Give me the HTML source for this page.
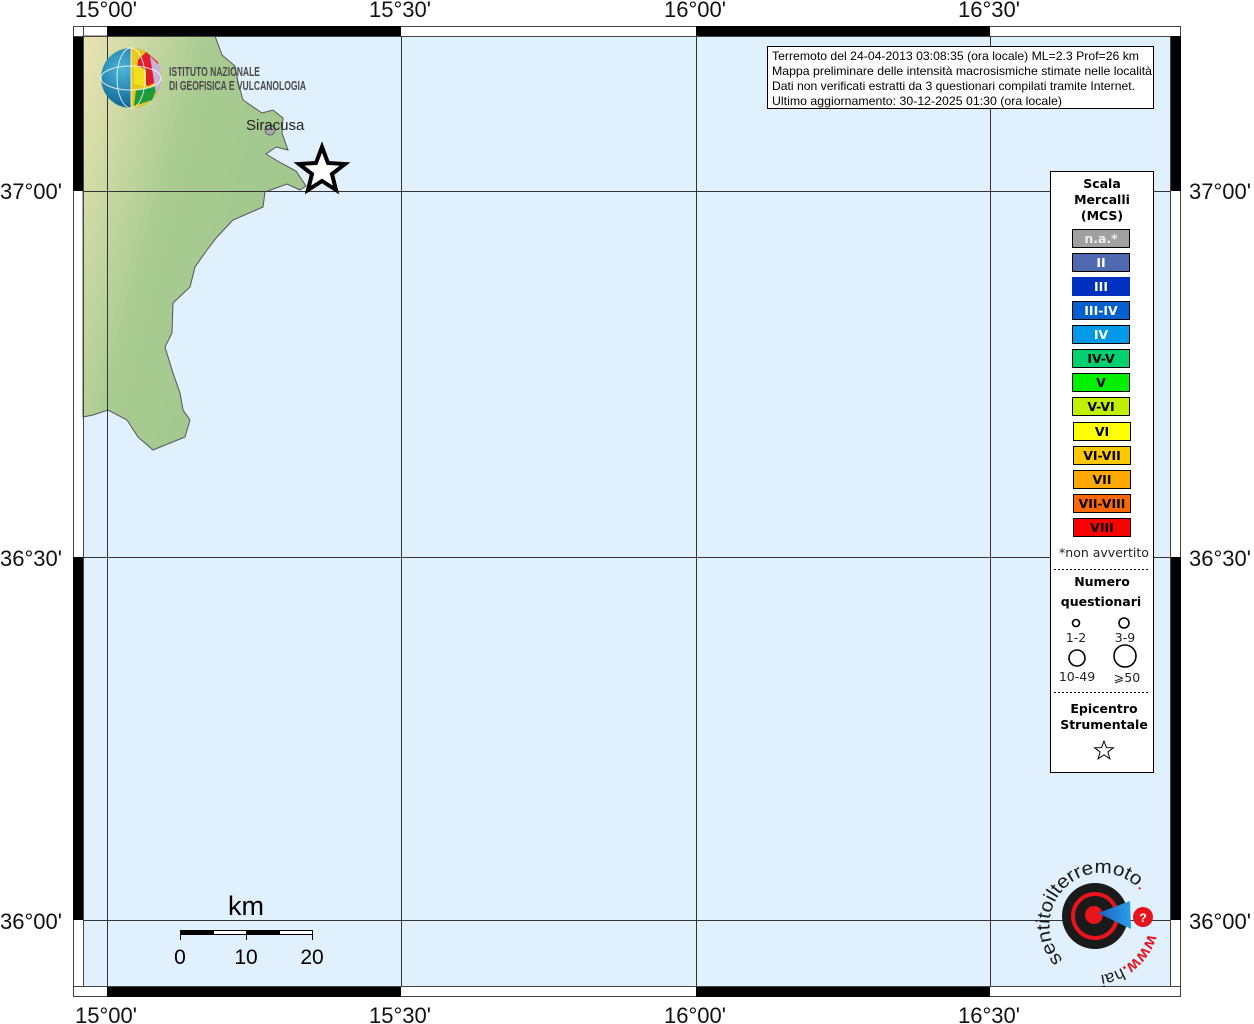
<!DOCTYPE html>
<html><head><meta charset="utf-8"><style>
html,body{margin:0;padding:0;background:#fff;width:1254px;height:1024px;overflow:hidden}
svg{display:block}
.lab{font-family:"Liberation Sans",sans-serif;font-size:22px;fill:#111}
.dv{font-family:"DejaVu Sans",sans-serif}
</style></head><body>
<svg width="1254" height="1024" viewBox="0 0 1254 1024" xmlns="http://www.w3.org/2000/svg">
<defs>
<linearGradient id="land" x1="0" y1="0" x2="1" y2="0.5">
<stop offset="0" stop-color="#e9e4b2"/><stop offset="0.2" stop-color="#cfd9a6"/><stop offset="0.45" stop-color="#a9cb92"/><stop offset="1" stop-color="#9fc78d"/>
</linearGradient>
<radialGradient id="glb" cx="0.35" cy="0.35" r="0.7"><stop offset="0" stop-color="#4cb6da"/><stop offset="1" stop-color="#0a5f8a"/></radialGradient>
<linearGradient id="cone" x1="0" y1="0" x2="1" y2="0"><stop offset="0" stop-color="#1a5fc0"/><stop offset="1" stop-color="#2aa0e8"/></linearGradient>
</defs>
<rect x="83" y="36" width="1088" height="951" fill="#e0f0fd"/>
<path d="M83,36 L215,36 L222,55 L235,66 L238,82 L243,100 L262,113 L273,110 L283,118 L282,133 L288,150 L276,147 L266,154 L281,163 L296,171 L306,186 L300,190 L287,184 L265,192 L263,207 L233,220 L217,237 L207,250 L195,267 L190,287 L173,303 L172,333 L165,347 L173,373 L180,393 L183,410 L190,420 L185,437 L153,450 L138,437 L127,420 L108,410 L93,415 L83,417 Z" fill="url(#land)" stroke="#555" stroke-width="1"/>
<g stroke="#333" stroke-width="1">
<line x1="107.5" y1="36" x2="107.5" y2="987"/><line x1="401.5" y1="36" x2="401.5" y2="987"/>
<line x1="696.5" y1="36" x2="696.5" y2="987"/><line x1="990.5" y1="36" x2="990.5" y2="987"/>
<line x1="83" y1="191.5" x2="1171" y2="191.5"/><line x1="83" y1="557.5" x2="1171" y2="557.5"/>
<line x1="83" y1="920.5" x2="1171" y2="920.5"/>
</g>
<rect x="73.5" y="26.5" width="1107" height="970" fill="none" stroke="#444" stroke-width="1"/>
<rect x="83.5" y="36.5" width="1087" height="950" fill="none" stroke="#444" stroke-width="1"/>
<g fill="#000">
<rect x="107" y="26" width="294" height="10"/><rect x="696" y="26" width="294" height="10"/>
<rect x="107" y="987" width="294" height="10"/><rect x="696" y="987" width="294" height="10"/>
<rect x="73" y="36" width="10" height="155"/><rect x="73" y="557" width="10" height="363"/>
<rect x="1171" y="36" width="10" height="155"/><rect x="1171" y="557" width="10" height="363"/>
</g>
<g stroke="#444" stroke-width="1"><line x1="73" y1="36.5" x2="83" y2="36.5"/><line x1="83.5" y1="26" x2="83.5" y2="36"/><line x1="1171" y1="986.5" x2="1181" y2="986.5"/><line x1="73" y1="986.5" x2="83" y2="986.5"/></g>
<g class="lab">
<text x="75" y="17">15°00'</text><text x="369" y="17">15°30'</text><text x="664" y="17">16°00'</text><text x="958" y="17">16°30'</text>
<text x="75" y="1023">15°00'</text><text x="369" y="1023">15°30'</text><text x="664" y="1023">16°00'</text><text x="958" y="1023">16°30'</text>
<text x="0" y="199">37°00'</text><text x="0" y="566">36°30'</text><text x="0" y="929">36°00'</text>
<text x="1189" y="199">37°00'</text><text x="1189" y="566">36°30'</text><text x="1189" y="929">36°00'</text>
</g>
<circle cx="270" cy="130" r="5" fill="#aaa" stroke="#666"/>
<text x="246" y="130" font-family="Liberation Sans,sans-serif" font-size="15" fill="#222">Siracusa</text>
<polygon points="322,147 328,163 345,164 332,174 336,190 322,181 308,190 312,174 299,164 316,163" fill="#fff" stroke="#000" stroke-width="4" stroke-linejoin="miter"/>
<circle cx="131" cy="78" r="30" fill="url(#glb)"/>
<path d="M131,48 A30,30 0 0 1 161,78 A30,30 0 0 1 131,108 Z" fill="#e8c820"/>
<path d="M146,52 L158,62 L160,80 L148,86 L136,80 L138,60Z" fill="#e31e2c"/>
<path d="M134,64 L146,70 L146,86 L134,84Z" fill="#f0e020"/>
<path d="M136,90 L158,86 L152,100 L134,106Z" fill="#1f9a3a"/>
<path d="M150,56 L160,66 L161,84 L156,94Z" fill="#c9b4d8"/>
<g fill="none" stroke="#fff" stroke-width="1" opacity="0.8"><ellipse cx="131" cy="78" rx="14" ry="30"/><ellipse cx="131" cy="78" rx="30" ry="12"/><line x1="131" y1="48" x2="131" y2="108"/></g>
<text x="169" y="76" font-family="Liberation Sans,sans-serif" font-size="13" font-weight="bold" fill="#4a4a4a" textLength="91" lengthAdjust="spacingAndGlyphs">ISTITUTO NAZIONALE</text>
<text x="169" y="90" font-family="Liberation Sans,sans-serif" font-size="13" font-weight="bold" fill="#4a4a4a" textLength="137" lengthAdjust="spacingAndGlyphs">DI GEOFISICA E VULCANOLOGIA</text>
<rect x="767.5" y="46.5" width="386" height="62" fill="#fff" stroke="#000"/>
<g font-family="Liberation Sans,sans-serif" font-size="12" fill="#000" lengthAdjust="spacingAndGlyphs">
<text x="772" y="60" textLength="367" lengthAdjust="spacingAndGlyphs">Terremoto del 24-04-2013 03:08:35 (ora locale) ML=2.3 Prof=26 km</text>
<text x="772" y="75" textLength="380" lengthAdjust="spacingAndGlyphs">Mappa preliminare delle intensità macrosismiche stimate nelle località</text>
<text x="772" y="90" textLength="363" lengthAdjust="spacingAndGlyphs">Dati non verificati estratti da 3 questionari compilati tramite Internet.</text>
<text x="772" y="105" textLength="290" lengthAdjust="spacingAndGlyphs">Ultimo aggiornamento: 30-12-2025 01:30 (ora locale)</text>
</g>
<rect x="1050.5" y="171.5" width="103" height="601" fill="#fff" stroke="#000"/>
<g class="dv" font-size="12.5" font-weight="bold" text-anchor="middle" fill="#000">
<text x="1102" y="188">Scala</text><text x="1102" y="204">Mercalli</text><text x="1102" y="220">(MCS)</text>
</g>
<g stroke="#000">
<rect x="1072.5" y="229.5" width="57" height="18" fill="#a0a0a0"/>
<rect x="1072.5" y="253.5" width="57" height="18" fill="#5068b0"/>
<rect x="1072.5" y="277.5" width="57" height="18" fill="#0030c0" stroke="#0030c0"/>
<rect x="1072.5" y="301.5" width="57" height="18" fill="#0060d0"/>
<rect x="1072.5" y="325.5" width="57" height="18" fill="#0098e8"/>
<rect x="1072.5" y="349.5" width="57" height="18" fill="#00d070"/>
<rect x="1072.5" y="373.5" width="57" height="18" fill="#00f000"/>
<rect x="1072.5" y="397.5" width="57" height="18" fill="#c0f000"/>
<rect x="1073.5" y="422.5" width="57" height="18" fill="#ffff00"/>
<rect x="1073.5" y="446.5" width="57" height="18" fill="#ffc800"/>
<rect x="1073.5" y="470.5" width="57" height="18" fill="#ffa800"/>
<rect x="1073.5" y="494.5" width="57" height="18" fill="#ff6800"/>
<rect x="1073.5" y="518.5" width="57" height="18" fill="#ff0000"/>
</g>
<g class="dv" font-size="12.5" font-weight="bold" text-anchor="middle">
<text x="1101" y="243" fill="#eee">n.a.*</text>
<text x="1101" y="267" fill="#fff">II</text>
<text x="1101" y="291" fill="#fff">III</text>
<text x="1101" y="315" fill="#fff">III-IV</text>
<text x="1101" y="339" fill="#fff">IV</text>
<text x="1101" y="363" fill="#000">IV-V</text>
<text x="1101" y="387" fill="#000">V</text>
<text x="1101" y="411" fill="#000">V-VI</text>
<text x="1102" y="436" fill="#000">VI</text>
<text x="1102" y="460" fill="#000">VI-VII</text>
<text x="1102" y="484" fill="#000">VII</text>
<text x="1102" y="508" fill="#000">VII-VIII</text>
<text x="1102" y="532" fill="#000">VIII</text>
</g>
<text x="1104" y="557" class="dv" font-size="12.5" text-anchor="middle" fill="#222">*non avvertito</text>
<line x1="1054" y1="569.5" x2="1150" y2="569.5" stroke="#000" stroke-dasharray="2,2"/>
<g class="dv" font-size="12.5" font-weight="bold" text-anchor="middle"><text x="1102" y="586">Numero</text><text x="1101" y="606">questionari</text></g>
<g fill="none" stroke="#000" stroke-width="1.6"><circle cx="1076" cy="623" r="3.5"/><circle cx="1124" cy="623" r="5"/><circle cx="1077" cy="658" r="8"/><circle cx="1125" cy="656" r="11"/></g>
<g class="dv" font-size="12.5" text-anchor="middle" fill="#222"><text x="1076" y="642">1-2</text><text x="1125" y="642">3-9</text><text x="1077" y="681">10-49</text><text x="1127" y="682">⩾50</text></g>
<line x1="1054" y1="692.5" x2="1150" y2="692.5" stroke="#000" stroke-dasharray="2,2"/>
<g class="dv" font-size="12.5" font-weight="bold" text-anchor="middle"><text x="1104" y="713">Epicentro</text><text x="1104" y="729">Strumentale</text></g>
<polygon points="1104,741 1106.4,747.6 1113.4,747.8 1107.9,752 1109.9,758.8 1104,754.8 1098.1,758.8 1100.1,752 1094.6,747.8 1101.6,747.6" fill="#fff" stroke="#000" stroke-width="1"/>
<text x="246" y="915" font-family="Liberation Sans,sans-serif" font-size="27" text-anchor="middle" fill="#000">km</text>
<rect x="180" y="930" width="33" height="5" fill="#000"/><rect x="213.5" y="930.5" width="33" height="4" fill="#fff" stroke="#000"/>
<rect x="246" y="930" width="33" height="5" fill="#000"/><rect x="279.5" y="930.5" width="33" height="4" fill="#fff" stroke="#000"/>
<g stroke="#000"><line x1="180.5" y1="930" x2="180.5" y2="940"/><line x1="246.5" y1="930" x2="246.5" y2="940"/><line x1="312.5" y1="930" x2="312.5" y2="940"/></g>
<g font-family="Liberation Sans,sans-serif" font-size="21" text-anchor="middle" fill="#000"><text x="180" y="964">0</text><text x="246" y="964">10</text><text x="312" y="964">20</text></g>
<circle cx="1095" cy="916" r="33" fill="#1a1a1a"/>
<circle cx="1095" cy="916" r="22" fill="none" stroke="#e8141e" stroke-width="4"/>
<circle cx="1094" cy="915" r="9" fill="#e8141e"/>
<path d="M1098,913 L1130,901 L1131,929 Z" fill="url(#cone)"/>
<circle cx="1143" cy="917" r="10" fill="#e8141e"/><text x="1143" y="922" font-family="Liberation Sans,sans-serif" font-size="12" font-weight="bold" fill="#fff" text-anchor="middle">?</text>
<path id="arc" d="M1063,960 A50,50 0 1 1 1140,890" fill="none"/>
<text font-family="Liberation Sans,sans-serif" font-size="19" fill="#1a1a1a"><textPath href="#arc" textLength="175" lengthAdjust="spacingAndGlyphs">sentitoilterremoto<tspan fill="#e8141e">.it</tspan></textPath></text>
<path id="arc2" d="M1148,934 A58,58 0 0 1 1072,972" fill="none"/>
<text font-family="Liberation Sans,sans-serif" font-size="17" font-weight="bold" fill="#e8141e"><textPath href="#arc2">www.<tspan fill="#1a1a1a" font-weight="normal">hai</tspan></textPath></text>
</svg>
</body></html>
